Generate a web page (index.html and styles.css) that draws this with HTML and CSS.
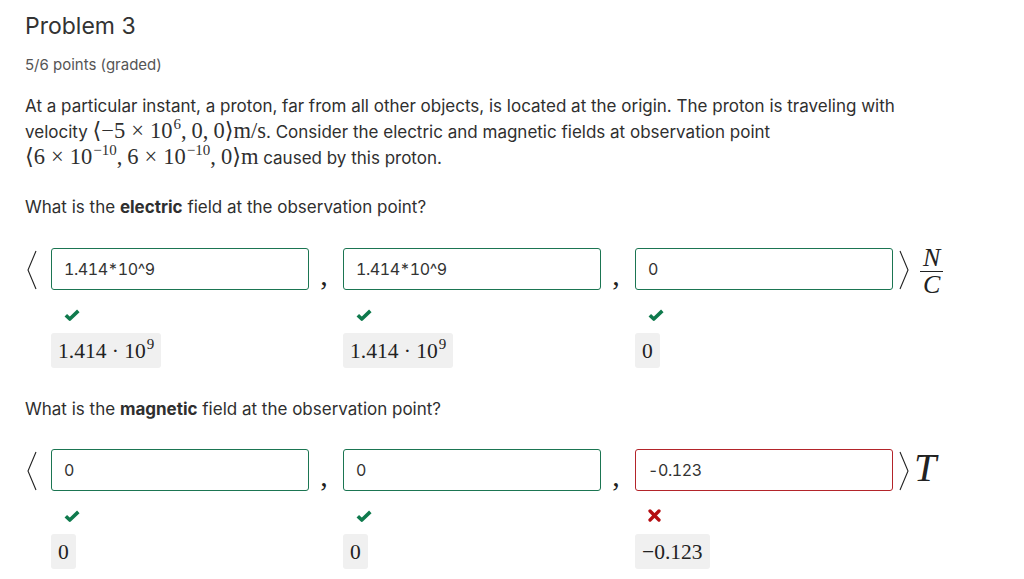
FILE: index.html
```html
<!DOCTYPE html>
<html lang="en">
<head>
<meta charset="utf-8">
<title>Problem 3</title>
<link rel="stylesheet" href="styles.css">
</head>
<body>
<main class="problem">
  <h2 class="title">Problem 3</h2>
  <div class="points">5/6 points (graded)</div>

  <p class="text">At a particular instant, a proton, far from all other objects, is located at the origin. The proton is traveling with velocity <span class="m">⟨−5<span class="op">×</span>10<sup>6</sup><span class="cm">,</span>0<span class="cm">,</span>0⟩m/s</span>. Consider the electric and magnetic fields at observation point <span class="m">⟨6<span class="op">×</span>10<sup>−10</sup><span class="cm">,</span>6<span class="op">×</span>10<sup>−10</sup><span class="cm">,</span>0⟩m</span> caused by this proton.</p>

  <p class="text q1">What is the <b>electric</b> field at the observation point?</p>

  <div class="vec v1">
    <div class="br"><svg width="16" height="42" viewBox="0 0 16 42"><path d="M11 3 L3 22 L11 41" fill="none" stroke="#222" stroke-width="1.1"/></svg></div>
    <div class="comp">
      <div class="inp ok">1.414*10^9</div>
      <div class="mark"><svg class="chk" viewBox="0 0 16 12"><path d="M1.8 6.2 L5.8 10 L14.3 1.9" fill="none" stroke="#0f7a4d" stroke-width="3.6" stroke-linejoin="round"/></svg></div>
      <div class="ans"><span>1.414 · 10<sup>9</sup></span></div>
    </div>
    <div class="sep">,</div>
    <div class="comp">
      <div class="inp ok">1.414*10^9</div>
      <div class="mark"><svg class="chk" viewBox="0 0 16 12"><path d="M1.8 6.2 L5.8 10 L14.3 1.9" fill="none" stroke="#0f7a4d" stroke-width="3.6" stroke-linejoin="round"/></svg></div>
      <div class="ans"><span>1.414 · 10<sup>9</sup></span></div>
    </div>
    <div class="sep">,</div>
    <div class="comp">
      <div class="inp ok">0</div>
      <div class="mark"><svg class="chk" viewBox="0 0 16 12"><path d="M1.8 6.2 L5.8 10 L14.3 1.9" fill="none" stroke="#0f7a4d" stroke-width="3.6" stroke-linejoin="round"/></svg></div>
      <div class="ans"><span>0</span></div>
    </div>
    <div class="unit">
      <svg width="14" height="42" viewBox="0 0 14 42"><path d="M4 3 L12 22 L4 41" fill="none" stroke="#222" stroke-width="1.1"/></svg>
      <span class="frac"><span class="num">N</span><span class="den">C</span></span>
    </div>
  </div>

  <p class="text q2">What is the <b>magnetic</b> field at the observation point?</p>

  <div class="vec v2">
    <div class="br"><svg width="16" height="42" viewBox="0 0 16 42"><path d="M11 3 L3 22 L11 41" fill="none" stroke="#222" stroke-width="1.1"/></svg></div>
    <div class="comp">
      <div class="inp ok">0</div>
      <div class="mark"><svg class="chk" viewBox="0 0 16 12"><path d="M1.8 6.2 L5.8 10 L14.3 1.9" fill="none" stroke="#0f7a4d" stroke-width="3.6" stroke-linejoin="round"/></svg></div>
      <div class="ans"><span>0</span></div>
    </div>
    <div class="sep">,</div>
    <div class="comp">
      <div class="inp ok">0</div>
      <div class="mark"><svg class="chk" viewBox="0 0 16 12"><path d="M1.8 6.2 L5.8 10 L14.3 1.9" fill="none" stroke="#0f7a4d" stroke-width="3.6" stroke-linejoin="round"/></svg></div>
      <div class="ans"><span>0</span></div>
    </div>
    <div class="sep">,</div>
    <div class="comp">
      <div class="inp bad">-0.123</div>
      <div class="mark"><svg class="xm" viewBox="0 0 14 14"><path d="M2.2 2.2 L11.8 11.8 M11.8 2.2 L2.2 11.8" fill="none" stroke="#b50d12" stroke-width="3.6" stroke-linecap="round"/></svg></div>
      <div class="ans"><span>−0.123</span></div>
    </div>
    <div class="unit">
      <svg width="14" height="42" viewBox="0 0 14 42"><path d="M4 3 L12 22 L4 41" fill="none" stroke="#222" stroke-width="1.1"/></svg>
      <span class="tu">T</span>
    </div>
  </div>
</main>
</body>
</html>
```
FILE: styles.css
```css
* { box-sizing: border-box; }
html, body { margin: 0; padding: 0; background: #fff; }
body {
  font-family: Inter, "Open Sans", "Liberation Sans", sans-serif;
  color: #2f2f2f;
}
.problem {
  padding: 11px 25px 0 25px;
  display: flex;
  flex-direction: column;
}
.title {
  margin: 0;
  font-size: 23px;
  font-weight: 400;
  line-height: 30px;
  color: #333;
}
.points {
  margin-top: 15px;
  font-size: 15px;
  line-height: 18px;
  color: #555;
}
.text {
  margin: 19px 0 0 0;
  max-width: 920px;
  font-size: 17px;
  line-height: 26px;
  color: #2f2f2f;
}
.text b { font-weight: 700; }
.q1 { margin-top: 23px; }
.q2 { margin-top: 28px; }
.m {
  font-family: "Liberation Serif", "DejaVu Serif", serif;
  font-size: 22.5px;
  line-height: 0;
  white-space: nowrap;
}
.m sup { font-size: 15px; line-height: 0; vertical-align: 9px; margin-left: 1px; }
.m .op { margin: 0 6px; }
.m .cm { margin-right: 5px; }
.vec {
  display: grid;
  grid-template-columns: 26px 258px 34px 258px 34px 258px auto;
}
.v1 { margin-top: 28px; }
.v2 { margin-top: 27px; }
.br { height: 42px; display: flex; align-items: center; }
.comp { display: flex; flex-direction: column; align-items: flex-start; }
.inp {
  width: 100%;
  height: 42px;
  border: 1px solid #1b7552;
  border-radius: 3px;
  padding: 0 12px;
  display: flex;
  align-items: center;
  font-size: 16px;
  letter-spacing: -0.4px;
  font-variant-numeric: tabular-nums;
  color: #333;
}
.inp.bad { border-color: #b3242a; }
.mark {
  height: 43px;
  padding: 6px 0 0 13px;
  display: flex;
  align-items: center;
}
.chk { width: 16px; height: 12px; }
.xm { width: 13px; height: 13px; }
.ans {
  background: #f0f0f0;
  border-radius: 3px;
  height: 35px;
  padding: 2px 7px 0 7px;
  display: flex;
  align-items: center;
  font-family: "Liberation Serif", "DejaVu Serif", serif;
  font-size: 21.5px;
  color: #222;
}
.ans sup { font-size: 15px; line-height: 0; vertical-align: 9px; margin-left: 1px; }
.sep {
  height: 42px;
  display: flex;
  align-items: flex-end;
  justify-content: center;
  padding-right: 4px;
  font-family: "Liberation Serif", "DejaVu Serif", serif;
  font-size: 30px;
  line-height: 30px;
  color: #222;
}
.unit {
  height: 42px;
  display: flex;
  align-items: center;
  padding-left: 3px;
}
.frac {
  display: inline-flex;
  flex-direction: column;
  align-items: center;
  margin-left: 10px;
  margin-top: 5px;
  font-family: "Liberation Serif", "DejaVu Serif", serif;
  font-style: italic;
  font-size: 26px;
  color: #222;
  line-height: 22px;
}
.frac .num { border-bottom: 1.5px solid #222; padding: 0 3px 2px 3px; }
.frac .den { padding-top: 2px; }
.tu {
  margin-left: 4px;
  font-family: "Liberation Serif", "DejaVu Serif", serif;
  font-style: italic;
  font-size: 40px;
  line-height: 38px;
  color: #222;
  align-self: flex-start;
  margin-top: 0;
}
```
